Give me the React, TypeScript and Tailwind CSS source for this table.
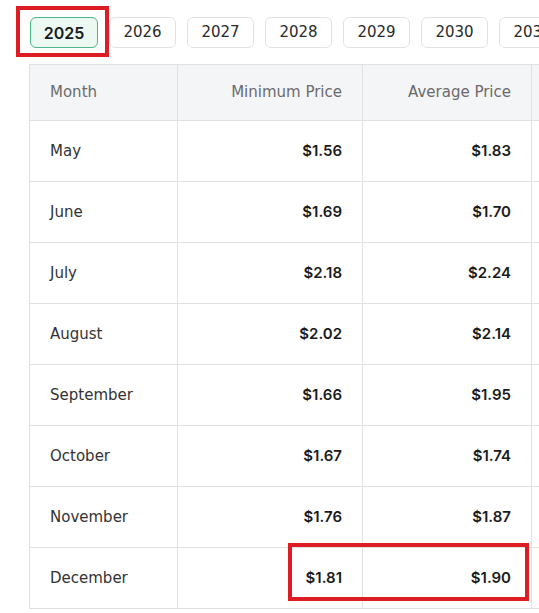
const years = ['2025', '2026', '2027', '2028', '2029', '2030', '2031'];

const rows = [
  { month: 'May', min: '$1.56', avg: '$1.83' },
  { month: 'June', min: '$1.69', avg: '$1.70' },
  { month: 'July', min: '$2.18', avg: '$2.24' },
  { month: 'August', min: '$2.02', avg: '$2.14' },
  { month: 'September', min: '$1.66', avg: '$1.95' },
  { month: 'October', min: '$1.67', avg: '$1.74' },
  { month: 'November', min: '$1.76', avg: '$1.87' },
  { month: 'December', min: '$1.81', avg: '$1.90' },
];

const cell = 'border border-[#e1e1e1] whitespace-nowrap';
const price = `${cell} pr-[20px] text-right font-['Inter',sans-serif] font-semibold text-[#1b1b1b]`;

export default function App() {
  return (
    <div className="relative h-[613px] w-[539px] overflow-hidden bg-white font-['DejaVu_Sans',sans-serif] text-[15px]">
      <div className="flex gap-[11px] pl-[30px] pt-[17px]">
        {years.map((y, i) => (
          <button
            key={y}
            className={
              i === 0
                ? "h-[31px] w-[68px] shrink-0 rounded-md border border-[#4cb889] bg-[#ebf9f2] font-['Inter',sans-serif] text-[16px] font-semibold text-[#1b1b1b]"
                : 'h-[31px] w-[67px] shrink-0 rounded-md border border-[#e2e2e2] bg-white text-[#2a2a2a]'
            }
          >
            {y}
          </button>
        ))}
      </div>

      <table className="mt-[16px] ml-[29px] w-[682px] table-fixed border-collapse">
        <colgroup>
          <col className="w-[148px]" />
          <col className="w-[185px]" />
          <col className="w-[169px]" />
          <col className="w-[180px]" />
        </colgroup>
        <thead>
          <tr className="h-[56px] bg-[#f4f5f7] text-[#6b6b6b]">
            <th className={`${cell} pl-[20px] text-left font-normal`}>Month</th>
            <th className={`${cell} pr-[20px] text-right font-normal`}>Minimum Price</th>
            <th className={`${cell} pr-[20px] text-right font-normal`}>Average Price</th>
            <th className={cell} />
          </tr>
        </thead>
        <tbody>
          {rows.map((r) => (
            <tr key={r.month} className="h-[61px]">
              <td className={`${cell} pl-[20px] text-[#333]`}>{r.month}</td>
              <td className={price}>{r.min}</td>
              <td className={price}>{r.avg}</td>
              <td className={cell} />
            </tr>
          ))}
        </tbody>
      </table>

      <div className="pointer-events-none absolute left-[16px] top-[6px] h-[51px] w-[93px] border-4 border-[#de1c24]" />
      <div className="pointer-events-none absolute left-[288px] top-[543px] h-[58px] w-[241px] border-4 border-[#de1c24]" />
    </div>
  );
}
